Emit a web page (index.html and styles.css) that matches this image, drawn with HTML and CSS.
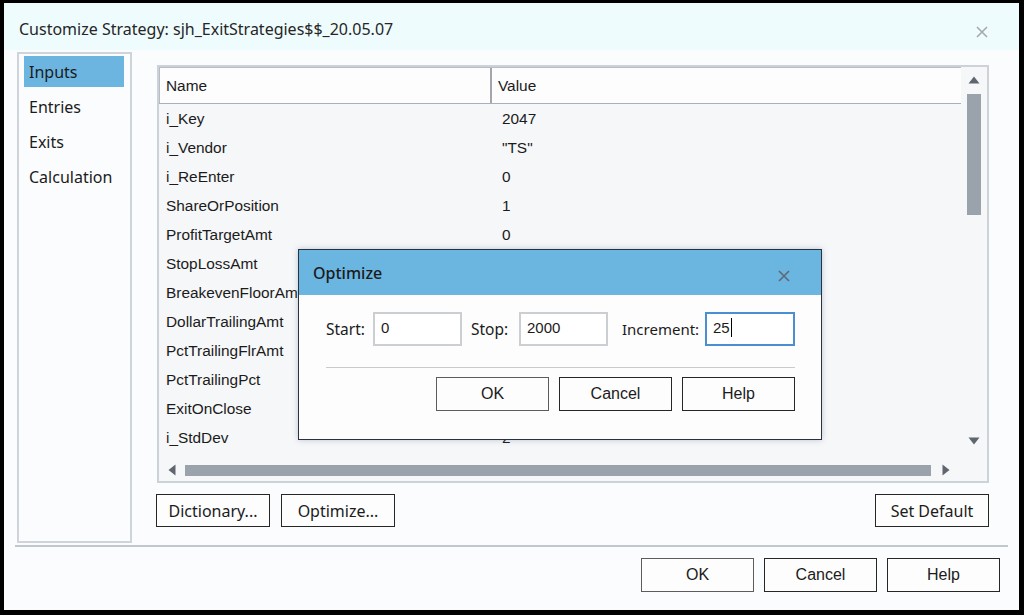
FILE: index.html
```html
<!DOCTYPE html>
<html>
<head>
<meta charset="utf-8">
<link rel="stylesheet" href="styles.css">
</head>
<body>
<div class="window">
  <div class="titlebar">
    <span class="title">Customize Strategy: sjh_ExitStrategies$$_20.05.07</span>
    <svg class="close" width="12" height="12" viewBox="0 0 12 12"><path d="M1 1L11 11M11 1L1 11" stroke="#a4a9ae" stroke-width="1.6"/></svg>
  </div>
  <div class="content">
    <div class="nav">
      <div class="nav-item selected">Inputs</div>
      <div class="nav-item">Entries</div>
      <div class="nav-item">Exits</div>
      <div class="nav-item">Calculation</div>
    </div>
    <div class="main">
      <div class="gridbox">
        <div class="grid-top">
          <div class="table">
            <div class="thead">
              <div class="th th-name">Name</div>
              <div class="th th-value">Value</div>
            </div>
            <div class="row"><div class="c-name">i_Key</div><div class="c-value">2047</div></div>
            <div class="row"><div class="c-name">i_Vendor</div><div class="c-value">"TS"</div></div>
            <div class="row"><div class="c-name">i_ReEnter</div><div class="c-value">0</div></div>
            <div class="row"><div class="c-name">ShareOrPosition</div><div class="c-value">1</div></div>
            <div class="row"><div class="c-name">ProfitTargetAmt</div><div class="c-value">0</div></div>
            <div class="row"><div class="c-name">StopLossAmt</div><div class="c-value"></div></div>
            <div class="row"><div class="c-name">BreakevenFloorAmt</div><div class="c-value"></div></div>
            <div class="row"><div class="c-name">DollarTrailingAmt</div><div class="c-value"></div></div>
            <div class="row"><div class="c-name">PctTrailingFlrAmt</div><div class="c-value"></div></div>
            <div class="row"><div class="c-name">PctTrailingPct</div><div class="c-value"></div></div>
            <div class="row"><div class="c-name">ExitOnClose</div><div class="c-value"></div></div>
            <div class="row"><div class="c-name">i_StdDev</div><div class="c-value">2</div></div>
          </div>
          <div class="vscroll">
            <div class="sbtn"><svg width="12" height="8" viewBox="0 0 12 8"><path d="M6 0.5L11.5 7.5H0.5Z" fill="#60666e"/></svg></div>
            <div class="vthumb"></div>
            <div class="vspace"></div>
            <div class="sbtn"><svg width="12" height="8" viewBox="0 0 12 8"><path d="M6 7.5L11.5 0.5H0.5Z" fill="#60666e"/></svg></div>
          </div>
        </div>
        <div class="hscroll">
          <div class="hbtn"><svg width="8" height="12" viewBox="0 0 8 12"><path d="M0.5 6L7.5 0.5V11.5Z" fill="#60666e"/></svg></div>
          <div class="hthumb"></div>
          <div class="hbtn hbtn-r"><svg width="8" height="12" viewBox="0 0 8 12"><path d="M7.5 6L0.5 0.5V11.5Z" fill="#60666e"/></svg></div>
          <div class="corner"></div>
        </div>
      </div>
      <div class="grid-actions">
        <button class="btn ui">Dictionary...</button>
        <button class="btn ui">Optimize...</button>
        <div class="spacer"></div>
        <button class="btn ui">Set Default</button>
      </div>
    </div>
  </div>
  <div class="separator"></div>
  <div class="footer">
    <button class="btn big ok">OK</button>
    <button class="btn big">Cancel</button>
    <button class="btn big">Help</button>
  </div>

  <div class="popup">
    <div class="popup-title">
      <span>Optimize</span>
      <svg class="pclose" width="12" height="12" viewBox="0 0 12 12"><path d="M1 1L11 11M11 1L1 11" stroke="#5d6b78" stroke-width="1.7"/></svg>
    </div>
    <div class="popup-body">
      <div class="fields">
        <label class="lbl lbl-start">Start:</label>
        <div class="input">0</div>
        <label class="lbl lbl-stop">Stop:</label>
        <div class="input">2000</div>
        <label class="lbl lbl-inc">Increment:</label>
        <div class="input focus">25<span class="caret"></span></div>
      </div>
      <div class="psep"></div>
      <div class="pbuttons">
        <button class="btn big ok">OK</button>
        <button class="btn big">Cancel</button>
        <button class="btn big">Help</button>
      </div>
    </div>
  </div>
</div>
</body>
</html>
```
FILE: styles.css
```css
* { box-sizing: border-box; }
html, body { margin: 0; padding: 0; background: #000; }
.window {
  position: relative;
  width: 1024px;
  height: 615px;
  border-style: solid;
  border-color: #000;
  border-width: 3px 5px 5px 4px;
  background: #fbfcfd;
  font-family: "Noto Sans", "Open Sans", sans-serif;
  color: #1b1b1b;
  display: flex;
  flex-direction: column;
}
.titlebar {
  height: 47px;
  background: #effcfe;
  display: flex;
  align-items: center;
  padding: 5px 0 0 15px;
}
.title { font-size: 16px; flex: 1; color: #262626; }
.close { margin-right: 31px; margin-top: 6px; }
.content {
  display: flex;
  height: 495px;
  padding-left: 13px;
}
.nav {
  width: 115px;
  height: 491px;
  margin-top: 2px;
  border: 2px solid #cfd3da;
  padding: 2px 6px 0 5px;
  display: flex;
  flex-direction: column;
  gap: 4px;
}
.nav-item {
  height: 31px;
  font-size: 16px;
  padding-left: 5px;
  display: flex;
  align-items: center;
}
.nav-item.selected { background: #6cb5e1; }
.main {
  margin-left: 25px;
  margin-top: 15px;
  width: 832px;
}
.gridbox {
  width: 832px;
  height: 418px;
  border: 2px solid #cdd2d9;
  background: #f6f7f9;
  display: flex;
  flex-direction: column;
}
.grid-top { display: flex; height: 392px; }
.table { width: 802px; font-family: "Liberation Sans", Arial, sans-serif; font-size: 15.4px; }
.thead {
  display: flex;
  height: 37px;
  background: #fdfdfe;
  border-top: 1px solid #b7bdc6;
  border-bottom: 1px solid #a9b0bb;
}
.th { display: flex; align-items: center; padding-left: 6px; }
.th-name { width: 333px; border-left: 1px solid #b7bdc6; border-right: 2px solid #a3a7ad; }
.th-value { flex: 1; }
.row { display: flex; height: 29px; align-items: center; }
.c-name { width: 333px; padding-left: 7px; white-space: nowrap; overflow: hidden; }
.c-value { padding-left: 10px; }
.vscroll {
  width: 26px;
  display: flex;
  flex-direction: column;
  align-items: center;
}
.sbtn { height: 26px; width: 26px; display: flex; align-items: center; justify-content: center; }
.vthumb { width: 14px; height: 121px; background: #9aa2ac; margin-top: 1px; margin-left: -1px; }
.vspace { flex: 1; }
.vscroll .sbtn:last-child { margin-bottom: 5px; }
.hscroll { display: flex; height: 22px; align-items: center; }
.hbtn { width: 26px; height: 22px; display: flex; align-items: center; justify-content: center; }
.hbtn-r { width: 30px; }
.hthumb { width: 746px; height: 11px; background: #9aa2ac; }
.corner { width: 26px; }
.grid-actions {
  display: flex;
  margin-top: 11px;
  margin-left: -1px;
  gap: 11px;
}
.spacer { flex: 1; }
.btn {
  height: 33px;
  width: 114px;
  background: #fdfdfd;
  border: 1px solid #262626;
  color: #1b1b1b;
  padding: 0;
  font-family: "Noto Sans", "Open Sans", sans-serif;
  font-size: 16px;
}
.btn.big {
  width: 113px;
  height: 34px;
  font-family: "Liberation Sans", Arial, sans-serif;
  font-size: 16px;
}
.btn.ok { border-color: #5c5c5c; }
.separator {
  height: 2px;
  margin: 0 11px;
  background: #c2c6cd;
}
.footer {
  display: flex;
  justify-content: flex-end;
  gap: 10px;
  padding: 11px 19px 0 0;
}
.popup {
  position: absolute;
  left: 294px;
  top: 246px;
  width: 524px;
  height: 191px;
  border: 1px solid #2a333d;
  background: #fdfdfd;
  box-shadow: 0 0 6px rgba(80, 110, 140, 0.35);
  display: flex;
  flex-direction: column;
}
.popup-title {
  height: 45px;
  background: #6bb5e1;
  display: flex;
  align-items: center;
  padding: 0 0 0 14px;
  font-size: 16px;
  font-weight: 500;
}
.popup-title span { flex: 1; }
.pclose { margin-right: 31px; margin-top: 6px; }
.popup-body { padding: 17px 26px 0 27px; }
.fields { display: flex; align-items: center; height: 34px; }
.lbl { font-size: 15.5px; white-space: nowrap; }
.lbl-start { width: 47px; }
.lbl-stop { width: 48px; margin-left: 9px; }
.lbl-inc { width: 83px; margin-left: 14px; font-size: 15px; }
.input {
  width: 89px;
  height: 34px;
  border: 2px solid #cbcfd4;
  background: #fff;
  font-family: "Liberation Sans", Arial, sans-serif;
  font-size: 15px;
  padding: 5px 0 0 6px;
  display: flex;
  align-items: flex-start;
}
.input.focus { border: 2px solid #4a8fd2; width: 90px; }
.caret { display: inline-block; width: 1px; height: 19px; background: #000; margin-left: 1px; margin-top: -1px; }
.psep { height: 1px; background: #c9cbcd; margin-top: 21px; }
.pbuttons { display: flex; justify-content: flex-end; gap: 10px; margin-top: 9px; }
```
